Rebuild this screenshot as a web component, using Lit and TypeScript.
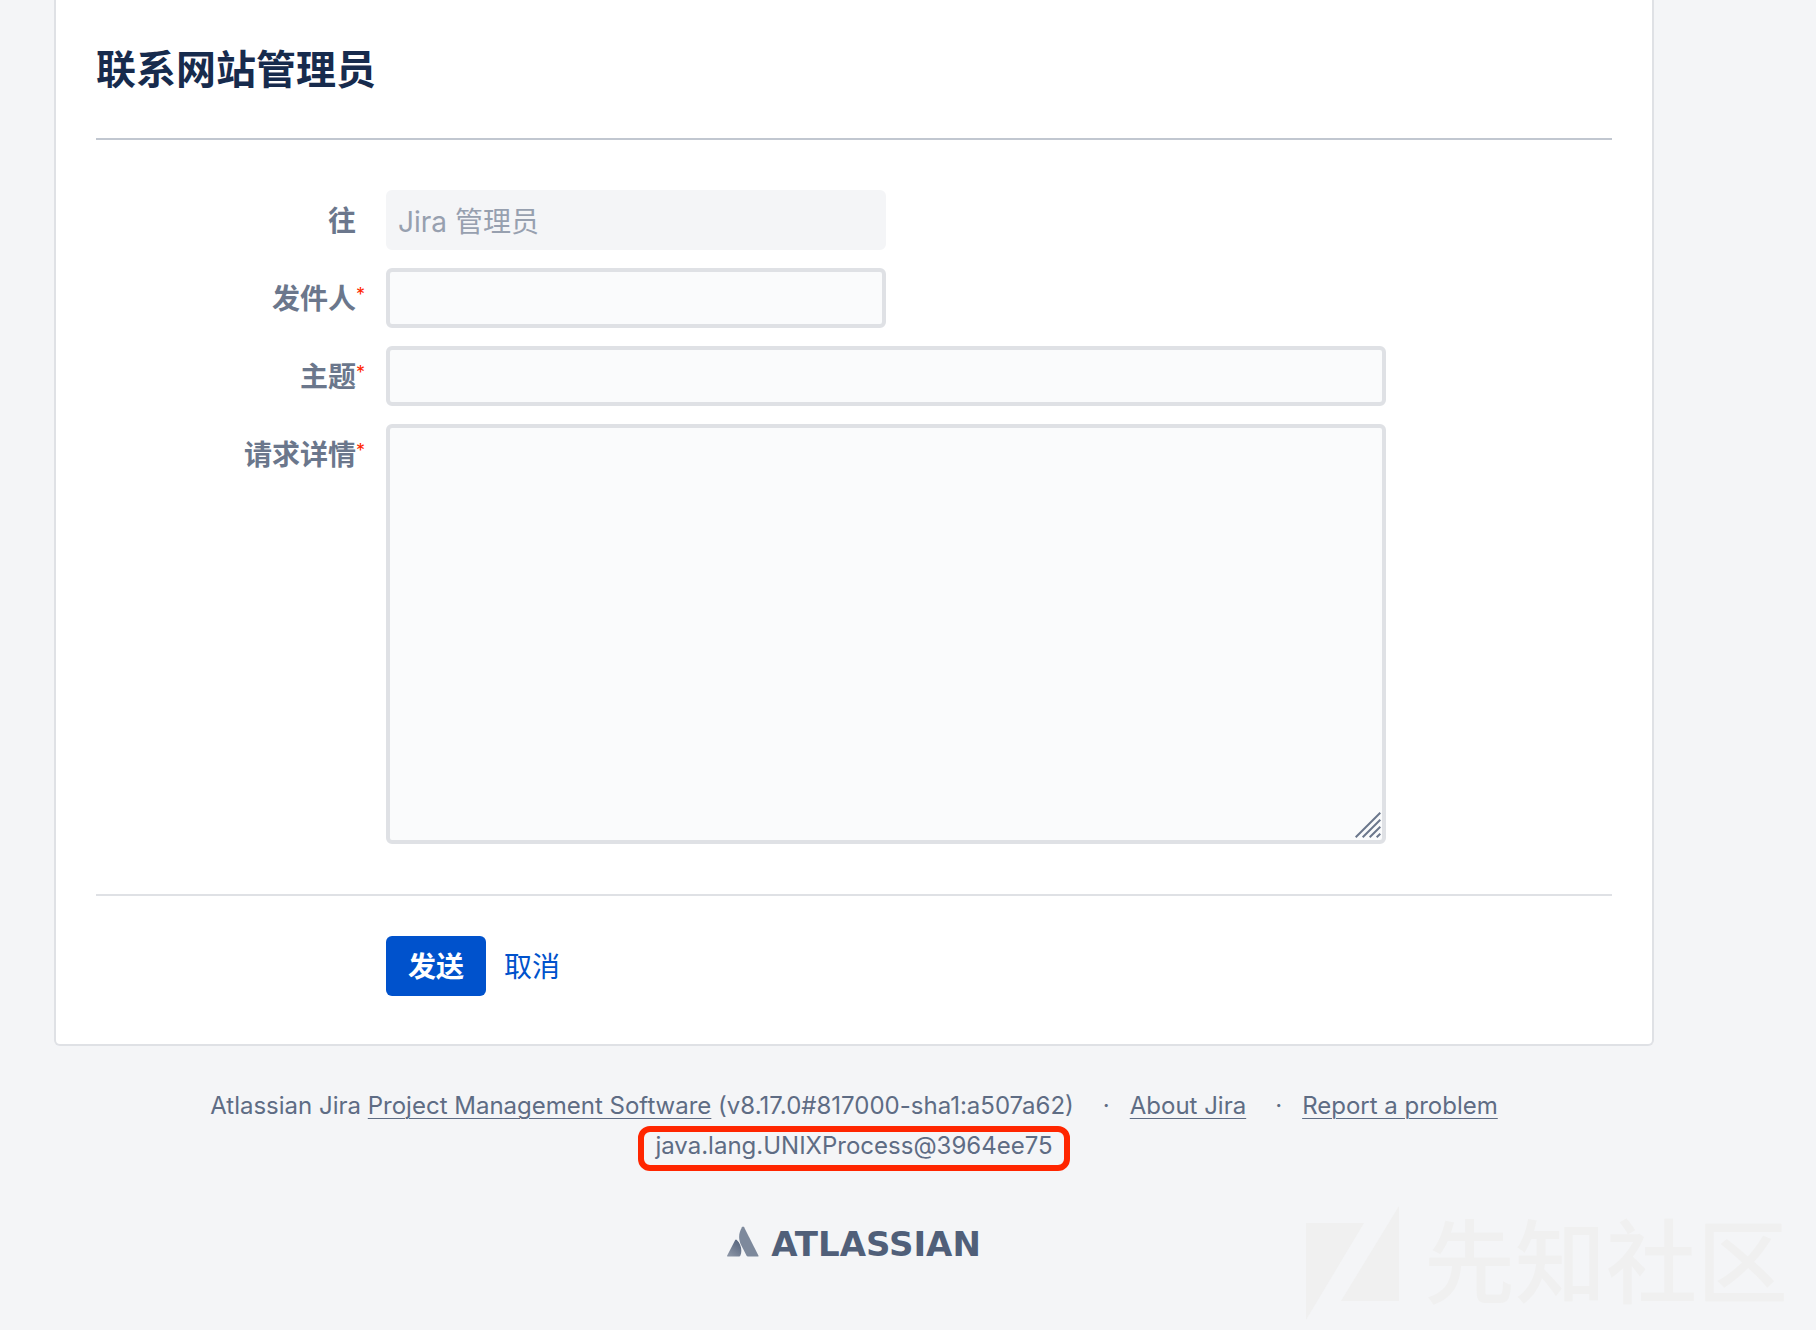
import { LitElement, html, css, nothing } from "lit";
import { customElement, property } from "lit/decorators.js";

@customElement("form-row")
class FormRow extends LitElement {
  @property() label = "";
  @property() kind = "text";
  @property() value = "";
  @property({ type: Boolean }) required = false;
  @property({ type: Boolean }) disabled = false;
  @property({ type: Boolean }) wide = false;

  static styles = css`
    :host {
      display: grid;
      grid-template-columns: 260px minmax(0, 1fr);
      column-gap: 30px;
    }
    .label {
      justify-self: end;
      align-self: start;
      position: relative;
      color: #6b778c;
      font-weight: 600;
      line-height: 62px;
      margin-bottom: -2px;
    }
    .star {
      position: absolute;
      left: 100%;
      top: -4px;
      color: #ff2600;
      font-size: 18px;
      font-weight: 400;
    }
    .field {
      position: relative;
      max-width: 500px;
    }
    .field.wide {
      max-width: 1000px;
    }
    .input {
      display: block;
      box-sizing: border-box;
      width: 100%;
      height: 60px;
      margin: 0;
      padding: 0 8px;
      border: 4px solid #dfe1e5;
      border-radius: 6px;
      background: #fafbfc;
      color: #172b4d;
      font: inherit;
      outline: none;
      resize: none;
    }
    .input:focus {
      border-color: #4c9aff;
    }
    .input:disabled {
      border-color: #f4f5f7;
      background: #f4f5f7;
      color: #97a0af;
    }
    .area {
      height: 420px;
      padding: 8px;
    }
    .grip {
      position: absolute;
      right: 5px;
      bottom: 6px;
      pointer-events: none;
    }
  `;

  render() {
    return html`
      <label class="label" for="control"
        >${this.label}${this.required
          ? html`<span class="star">*</span>`
          : nothing}</label
      >
      <div class="field ${this.wide ? "wide" : ""}">
        ${this.kind === "area"
          ? html`<textarea id="control" class="input area"></textarea>
              <svg class="grip" width="26" height="26" viewBox="0 0 26 26">
                <path
                  d="M.7 25.3 25.3.7M7.7 25.3 25.3 7.7M14.7 25.3 25.3 14.7M21.7 25.3 25.3 21.7"
                  stroke="#6b778c"
                  stroke-width="2"
                />
              </svg>`
          : html`<input
              id="control"
              class="input"
              type="text"
              .value=${this.value}
              ?disabled=${this.disabled}
            />`}
      </div>
    `;
  }
}

@customElement("app-root")
class AppRoot extends LitElement {
  static styles = css`
    :host {
      display: block;
      position: relative;
      box-sizing: border-box;
      min-height: 100vh;
      padding: 0 162px 0 54px;
      overflow: hidden;
      background: #f4f5f7;
      color: #172b4d;
      font: 28px/40px Inter, "Noto Sans CJK SC", sans-serif;
    }
    .card {
      padding: 42px 40px 48px;
      border: 2px solid #dfe1e5;
      border-top: 0;
      border-radius: 0 0 6px 6px;
      background: #fff;
    }
    .title {
      margin: 0;
      padding-bottom: 40px;
      border-bottom: 2px solid #c1c7d0;
      font-size: 40px;
      line-height: 56px;
      font-weight: 600;
    }
    .rows {
      display: grid;
      gap: 18px;
      padding: 50px 0;
    }
    .actions {
      display: flex;
      align-items: center;
      gap: 18px;
      padding: 40px 0 0 290px;
      border-top: 2px solid #dfe1e5;
    }
    .send {
      height: 60px;
      padding: 2px 22px 0;
      border: 0;
      border-radius: 6px;
      background: #0052cc;
      color: #fff;
      font: inherit;
      font-weight: 600;
    }
    .cancel {
      padding-top: 2px;
      color: #0052cc;
      text-decoration: none;
    }
    .footer {
      display: flex;
      flex-direction: column;
      align-items: center;
      padding-top: 40px;
      color: #5e6c84;
      font-size: 24px;
    }
    .info {
      display: flex;
      flex-wrap: wrap;
      justify-content: center;
      margin: 0;
      padding: 0;
      list-style: none;
    }
    .info-item + .info-item::before {
      content: "·";
      padding: 0 20px 0 29px;
    }
    .link {
      color: inherit;
      text-underline-offset: 4px;
      text-decoration-thickness: 1px;
    }
    .process {
      box-sizing: border-box;
      height: 45px;
      padding: 0 11px;
      border: 6px solid #ff2600;
      border-radius: 12px;
      line-height: 28px;
    }
    .brand {
      display: flex;
      align-items: flex-start;
      gap: 12px;
      margin-top: 55px;
      color: #505f79;
      font: 700 34px/36px "DejaVu Sans", sans-serif;
      text-decoration: none;
    }
    .mark {
      display: block;
    }
    .watermark {
      position: absolute;
      right: 28px;
      bottom: 10px;
      display: flex;
      align-items: center;
      gap: 24px;
      color: #f0f0f0;
      font-size: 91px;
      font-weight: 500;
      line-height: 114px;
      pointer-events: none;
    }
  `;

  render() {
    return html`
      <main class="card">
        <h1 class="title">联系网站管理员</h1>
        <form @submit=${(e: Event) => e.preventDefault()}>
          <div class="rows">
            <form-row label="往" value="Jira 管理员" disabled></form-row>
            <form-row label="发件人" required></form-row>
            <form-row label="主题" required wide></form-row>
            <form-row label="请求详情" kind="area" required wide></form-row>
          </div>
          <div class="actions">
            <button class="send" type="submit">发送</button>
            <a class="cancel" href="#">取消</a>
          </div>
        </form>
      </main>
      <footer class="footer">
        <ul class="info">
          <li class="info-item">
            Atlassian Jira
            <a class="link" href="#">Project Management Software</a>
            (v8.17.0#817000-sha1:a507a62)
          </li>
          <li class="info-item"><a class="link" href="#">About Jira</a></li>
          <li class="info-item"><a class="link" href="#">Report a problem</a></li>
        </ul>
        <div class="process">java.lang.UNIXProcess@3964ee75</div>
        <a class="brand" href="#">
          <svg class="mark" width="32" height="31" viewBox="0 0 32 31">
            <defs>
              <linearGradient id="shade" x1="1" y1="0" x2="0.3" y2="1">
                <stop offset="0" stop-color="#505f79" />
                <stop offset="1" stop-color="#8993a4" />
              </linearGradient>
            </defs>
            <path
              d="M8.2 14 .2 29.400Q-.2 30.500 1 30.500H12.200Q13 30.500 13.300 29.700C15.500 25 14.200 18 9.800 13.900Q8.900 13.200 8.200 14Z"
              fill="url(#shade)"
            />
            <path
              d="M15 1.200C11.200 7.300 11.500 13.800 14 18.800L19.600 29.800Q20 30.500 20.800 30.500H30.700Q31.900 30.500 31.400 29.400L17.100 1.200Q16 -.4 15 1.200Z"
              fill="#7d899c"
            />
          </svg>
          <span>ATLASSIAN</span>
        </a>
      </footer>
      <div class="watermark">
        <svg width="94" height="114" viewBox="0 0 94 114">
          <path d="M0 17H58L0 114ZM93 0V95H35Z" fill="#f0f0f0" />
        </svg>
        <span>先知社区</span>
      </div>
    `;
  }
}
